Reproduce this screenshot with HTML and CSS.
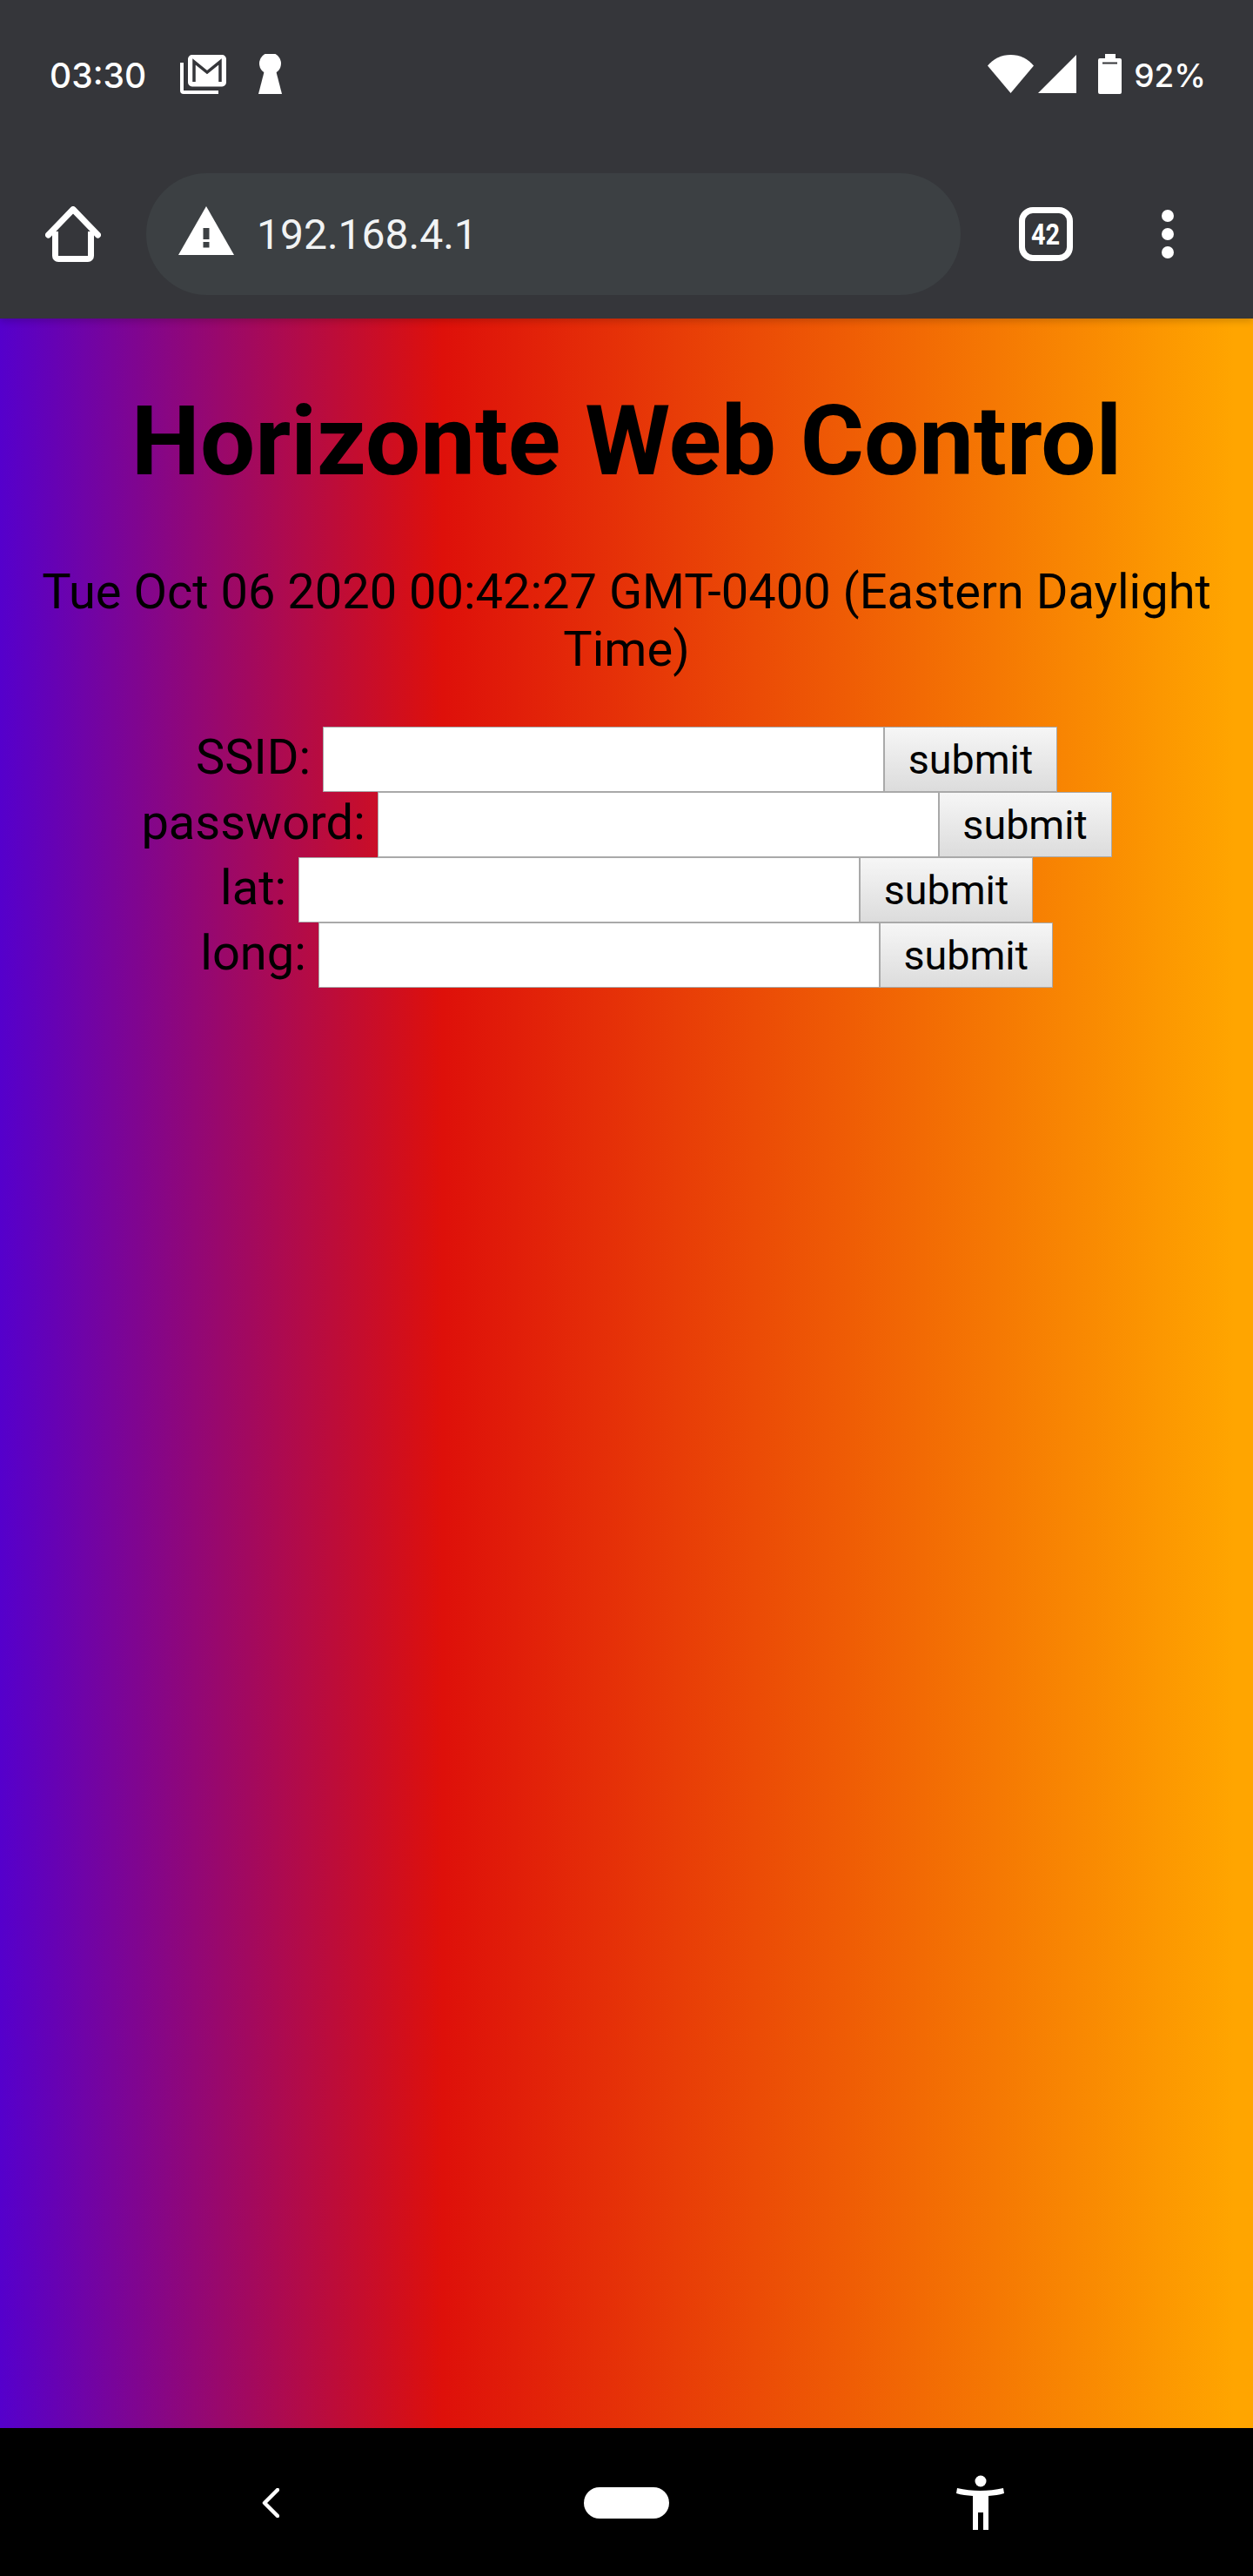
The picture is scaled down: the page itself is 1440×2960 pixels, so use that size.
FILE: index.html
```html
<!DOCTYPE html>
<html lang="en">
<head>
<meta charset="utf-8">
<title>Horizonte Web Control</title>
<link rel="stylesheet" href="styles.css">
</head>
<body>
<header class="chrome">
  <div class="status">
    <div class="status-group">
      <span class="clock">03:30</span>
      <svg class="ic-mail" width="53" height="45" viewBox="0 0 53 45"><path d="M2 9V41a2 2 0 0 0 2 2H44" fill="none" stroke="#fff" stroke-width="4"/><rect x="10.75" y="1.75" width="40.5" height="33" rx="3" fill="#fff" stroke="#fff" stroke-width="3.5"/><path d="M16 31V8L31 20L46 8V31" fill="none" stroke="#35363a" stroke-width="3.5"/></svg>
      <svg class="ic-key" width="27" height="46" viewBox="0 0 27 46"><circle cx="13.5" cy="11" r="12.5" fill="#fff"/><path d="M8 15H19L27 46H0Z" fill="#fff"/></svg>
    </div>
    <div class="status-group">
      <svg class="ic-wifi" width="53" height="44" viewBox="0 0 53 44"><path d="M0 12.500C6.500 4.500 16 0 26.500 0S46.500 4.500 53 12.500L26.500 44Z" fill="#fff"/></svg>
      <svg class="ic-signal" width="44" height="44" viewBox="0 0 44 44"><path d="M44 0V44H0Z" fill="#fff"/></svg>
      <svg class="ic-battery" width="27" height="46" viewBox="0 0 27 46"><path d="M8 0H20V5H25a2 2 0 0 1 2 2V44a2 2 0 0 1-2 2H2a2 2 0 0 1-2-2V7a2 2 0 0 1 2-2H8Z" fill="#fff"/><rect x="5" y="9.500" width="17" height="2" fill="#35363a"/></svg>
      <span class="percent">92%</span>
    </div>
  </div>
  <div class="toolbar">
    <svg class="ic-home" width="64" height="64" viewBox="0 0 64 64"><path d="M3.500 33L32 3.500L60.500 33" fill="none" stroke="#fff" stroke-width="7" stroke-linecap="round" stroke-linejoin="round"/><path d="M11.500 29V57a3.500 3.500 0 0 0 3.500 3.500H49a3.500 3.500 0 0 0 3.500-3.500V29" fill="none" stroke="#fff" stroke-width="7"/></svg>
    <div class="omnibox">
      <svg class="ic-warn" width="64" height="64" viewBox="0 0 64 64"><path d="M32 0L64 56H0Z" fill="#fff"/><rect x="28.500" y="25" width="7" height="13" fill="#3c4043"/><rect x="28.500" y="41" width="7" height="6.500" fill="#3c4043"/></svg>
      <span class="url">192.168.4.1</span>
    </div>
    <div class="tabs"><span>42</span></div>
    <div class="menu"><i></i><i></i><i></i></div>
  </div>
</header>
<main class="page">
  <h1>Horizonte Web Control</h1>
  <p class="date">Tue Oct 06 2020 00:42:27 GMT-0400 (Eastern Daylight Time)</p>
  <form class="fields">
    <div class="row"><label>SSID:</label> <input type="text"><button type="button">submit</button></div>
    <div class="row"><label>password:</label> <input type="text"><button type="button">submit</button></div>
    <div class="row"><label>lat:</label> <input type="text"><button type="button">submit</button></div>
    <div class="row"><label>long:</label> <input type="text"><button type="button">submit</button></div>
  </form>
</main>
<footer class="nav">
  <svg class="ic-back" width="20" height="34" viewBox="0 0 20 34"><path d="M18 2L3 17L18 32" fill="none" stroke="#fff" stroke-width="4.500" stroke-linecap="round" stroke-linejoin="round"/></svg>
  <div class="pill"></div>
  <svg class="ic-a11y" width="55" height="64" viewBox="0 0 55 64"><circle cx="28" cy="8" r="6.500" fill="#fff"/><path d="M1 16C18 20 37 20 54 16L55 22C49 24 44 24.500 37 25V64H31V44H25V64H19V25C12 24.500 6 24 0 22Z" fill="#fff"/></svg>
</footer>
</body>
</html>
```
FILE: styles.css
```css
* { box-sizing: border-box; }
html, body { margin: 0; padding: 0; }
body {
  width: 1440px;
  height: 2960px;
  display: flex;
  flex-direction: column;
  overflow: hidden;
  font-family: Roboto, "Liberation Sans", sans-serif;
  color: #000;
}
svg { display: block; flex: none; }

.chrome {
  height: 366px;
  flex: none;
  padding-top: 62px;
  background: #35363a;
  color: #fff;
  position: relative;
  z-index: 1;
  box-shadow: 0 3px 8px rgba(0, 0, 0, .18);
}
.status {
  display: flex;
  justify-content: space-between;
  align-items: center;
  height: 46px;
  padding: 0 54px 0 57px;
}
.status-group { display: flex; align-items: center; }
.clock, .percent {
  font-family: Inter, Roboto, sans-serif;
  font-size: 39px;
  font-weight: 500;
  line-height: 46px;
  padding-top: 4px;
}
.ic-mail { margin-left: 39px; }
.ic-key { margin-left: 37px; }
.ic-signal { margin-left: 5px; }
.ic-battery { margin-left: 25px; }
.percent { margin-left: 14px; font-size: 37px; }

.toolbar {
  display: flex;
  align-items: center;
  height: 140px;
  padding-left: 52px;
  margin-top: 91px;
}
.omnibox {
  display: flex;
  align-items: center;
  width: 936px;
  height: 140px;
  margin-left: 52px;
  padding-left: 37px;
  border-radius: 70px;
  background: #3c4043;
}
.url {
  margin-left: 26px;
  font-size: 48px;
  color: #f1f3f4;
}
.tabs {
  width: 62px;
  height: 62px;
  margin-left: 67px;
  border: 7px solid #fff;
  border-radius: 16px;
  display: flex;
  align-items: center;
  justify-content: center;
  font-size: 34px;
  font-weight: 700;
}
.tabs span { transform: scaleX(.85); }
.menu {
  display: flex;
  flex-direction: column;
  gap: 7px;
  margin-left: 102px;
}
.menu i {
  display: block;
  width: 14px;
  height: 14px;
  border-radius: 50%;
  background: #fff;
}

.page {
  flex: 1;
  padding: 75px 28px 0;
  text-align: center;
  background: linear-gradient(to right, #5500cc 0, #de100a 35.300%, #ffa500 98.500%);
}
h1 {
  margin: 0 0 75px;
  font-size: 112px;
  font-weight: 700;
}
.date {
  margin: 0 0 56px;
  font-size: 56px;
}
.row {
  height: 75px;
  font-size: 56px;
  white-space: nowrap;
}
input, button {
  margin: 0;
  height: 75px;
  border: 1px solid #a9a9a9;
  border-radius: 0;
  font-family: Roboto, sans-serif;
  font-size: 46.670px;
  vertical-align: baseline;
}
input {
  width: 645px;
  padding: 4px 7px;
  background: #fff;
}
button {
  width: 199px;
  padding: 0;
  color: #000;
  background: linear-gradient(to bottom, #f6f6f6, #dcdcdc);
}

.nav {
  height: 170px;
  flex: none;
  background: #000;
  display: flex;
  align-items: center;
  padding-left: 301px;
}
.ic-back { margin-top: 2px; }
.pill {
  width: 98px;
  height: 36px;
  margin-left: 350px;
  margin-top: 2px;
  border-radius: 18px;
  background: #fff;
}
.ic-a11y { margin-left: 330px; }
```
